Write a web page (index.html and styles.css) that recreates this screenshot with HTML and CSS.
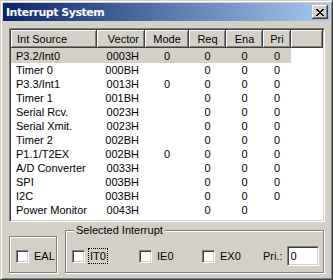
FILE: index.html
```html
<!DOCTYPE html>
<html lang="en">
<head>
  <meta charset="UTF-8" />
  <meta name="viewport" content="width=device-width, initial-scale=1.0"/>
  <title>Interrupt System</title>
  <link rel="stylesheet" href="styles.css">
</head>
<body>
  <div class="window">
    <div class="titlebar">
      <span class="title">Interrupt System</span>
      <button class="close-btn" type="button">
        <svg width="8" height="7" viewBox="0 0 8 7" shape-rendering="crispEdges">
          <path fill="#000" d="M0 0h2v1h-2z M6 0h2v1h-2z M1 1h2v1h-2z M5 1h2v1h-2z M2 2h4v1h-4z M3 3h2v1h-2z M2 4h4v1h-4z M1 5h2v1h-2z M5 5h2v1h-2z M0 6h2v1h-2z M6 6h2v1h-2z"/>
        </svg>
      </button>
    </div>

    <div class="client">
      <div class="listview">
        <table class="irq-table">
          <colgroup>
            <col class="w-src"><col class="w-vec"><col class="w-mode"><col class="w-req"><col class="w-ena"><col class="w-pri"><col>
          </colgroup>
          <thead>
            <tr>
              <th class="left">Int Source</th>
              <th class="right">Vector</th>
              <th>Mode</th>
              <th>Req</th>
              <th>Ena</th>
              <th>Pri</th>
              <th></th>
            </tr>
          </thead>
          <tbody>
            <tr class="selected"><td class="left">P3.2/Int0</td><td class="right">0003H</td><td>0</td><td>0</td><td>0</td><td>0</td><td class="filler"></td></tr>
            <tr><td class="left">Timer 0</td><td class="right">000BH</td><td></td><td>0</td><td>0</td><td>0</td><td class="filler"></td></tr>
            <tr><td class="left">P3.3/Int1</td><td class="right">0013H</td><td>0</td><td>0</td><td>0</td><td>0</td><td class="filler"></td></tr>
            <tr><td class="left">Timer 1</td><td class="right">001BH</td><td></td><td>0</td><td>0</td><td>0</td><td class="filler"></td></tr>
            <tr><td class="left">Serial Rcv.</td><td class="right">0023H</td><td></td><td>0</td><td>0</td><td>0</td><td class="filler"></td></tr>
            <tr><td class="left">Serial Xmit.</td><td class="right">0023H</td><td></td><td>0</td><td>0</td><td>0</td><td class="filler"></td></tr>
            <tr><td class="left">Timer 2</td><td class="right">002BH</td><td></td><td>0</td><td>0</td><td>0</td><td class="filler"></td></tr>
            <tr><td class="left">P1.1/T2EX</td><td class="right">002BH</td><td>0</td><td>0</td><td>0</td><td>0</td><td class="filler"></td></tr>
            <tr><td class="left">A/D Converter</td><td class="right">0033H</td><td></td><td>0</td><td>0</td><td>0</td><td class="filler"></td></tr>
            <tr><td class="left">SPI</td><td class="right">003BH</td><td></td><td>0</td><td>0</td><td>0</td><td class="filler"></td></tr>
            <tr><td class="left">I2C</td><td class="right">003BH</td><td></td><td>0</td><td>0</td><td>0</td><td class="filler"></td></tr>
            <tr><td class="left">Power Monitor</td><td class="right">0043H</td><td></td><td>0</td><td>0</td><td></td><td class="filler"></td></tr>
          </tbody>
        </table>
      </div>

      <div class="bottom">
        <div class="group eal-box">
          <div class="group-row">
            <label class="cb"><span class="box"></span><span class="cb-text">EAL</span></label>
          </div>
        </div>
        <fieldset class="group sel-box">
          <legend>Selected Interrupt</legend>
          <div class="group-row sel-row">
            <label class="cb"><span class="box"></span><span class="cb-text focused">IT0</span></label>
            <label class="cb"><span class="box"></span><span class="cb-text">IE0</span></label>
            <label class="cb"><span class="box"></span><span class="cb-text">EX0</span></label>
            <div class="pri">
              <span>Pri.:</span>
              <span class="edit">0</span>
            </div>
          </div>
        </fieldset>
      </div>
    </div>
  </div>
</body>
</html>
```

FILE: styles.css
```css
body {
  margin: 0;
  font-family: "Liberation Sans", Arial, sans-serif;
  font-size: 11px;
  color: #000;
  background: #d4d0c8;
}

.window {
  width: 333px;
  height: 280px;
  box-sizing: border-box;
  background: #d4d0c8;
  border: 1px solid;
  border-color: #d4d0c8 #404040 #404040 #d4d0c8;
  box-shadow: inset 1px 1px #fff, inset -1px -1px #808080;
  padding: 2px;
  display: flex;
  flex-direction: column;
}

/* title bar */
.titlebar {
  height: 18px;
  flex-shrink: 0;
  display: flex;
  align-items: center;
  justify-content: space-between;
  background: linear-gradient(to right, #0a246a, #a6caf0);
  padding: 0 2px 0 3px;
}

.title {
  color: #fff;
  font-family: "DejaVu Sans", sans-serif;
  font-weight: bold;
  font-size: 11px;
  letter-spacing: -0.5px;
}

.close-btn {
  width: 16px;
  height: 14px;
  padding: 0;
  margin: 0;
  border: 0;
  background: #d4d0c8;
  box-shadow: inset -1px -1px #404040, inset 1px 1px #fff, inset -2px -2px #808080;
  display: flex;
  align-items: center;
  justify-content: center;
}

.close-btn svg {
  display: block;
  margin: 0 1px 0 0;
}

/* client area */
.client {
  flex: 1;
  padding: 7px 5px 0 6px;
  display: flex;
  flex-direction: column;
}

.listview {
  height: 194px;
  box-sizing: border-box;
  background: #fff;
  border: 1px solid;
  border-color: #808080 #fff #fff #808080;
  box-shadow: inset 1px 1px #404040, inset -1px -1px #d4d0c8;
  padding: 1px;
  overflow: hidden;
}

.irq-table {
  width: 100%;
  table-layout: fixed;
  border-collapse: separate;
  border-spacing: 0;
}

.w-src { width: 86px; }
.w-vec { width: 48px; }
.w-mode { width: 44px; }
.w-req { width: 37px; }
.w-ena { width: 37px; }
.w-pri { width: 28px; }

.irq-table th {
  height: 18px;
  padding: 0;
  font-weight: normal;
  background: #d4d0c8;
  box-shadow: inset -1px -1px #404040, inset 1px 1px #fff, inset -2px -2px #808080;
  text-align: center;
  white-space: nowrap;
}

.irq-table td {
  height: 14px;
  line-height: 14px;
  padding: 0;
  text-align: center;
  white-space: nowrap;
}

.irq-table .left {
  text-align: left;
  padding-left: 5px;
}

.irq-table th.left {
  padding-left: 6px;
}

.irq-table .right {
  text-align: right;
  padding-right: 6px;
}

.irq-table tbody tr:first-child td {
  padding-top: 1px;
}

.selected td {
  background: #d4d0c8;
}

.selected td.filler {
  background: #fff;
}

/* bottom controls */
.bottom {
  display: flex;
  align-items: flex-end;
  margin-top: 2px;
}

.group {
  margin: 0;
  padding: 0 6px;
  border: 1px solid #808080;
  box-shadow: inset 1px 1px #fff, 1px 1px #fff;
  min-width: 0;
}

.eal-box {
  width: 48px;
  box-sizing: border-box;
}

.sel-box {
  flex: 1;
  margin-left: 8px;
  margin-right: 1px;
}

.sel-box legend {
  margin-left: 2px;
  padding: 0 2px;
  background: #d4d0c8;
  line-height: 13px;
}

.group-row {
  height: 35px;
  box-sizing: border-box;
  padding-top: 3px;
  display: flex;
  align-items: center;
}

.sel-row {
  display: grid;
  grid-template-columns: 67px 63px 61px auto;
  align-items: center;
}

.cb {
  display: flex;
  align-items: center;
  gap: 5px;
}

.box {
  width: 13px;
  height: 13px;
  box-sizing: border-box;
  background: #fff;
  border: 1px solid;
  border-color: #808080 #fff #fff #808080;
  box-shadow: inset 1px 1px #404040, inset -1px -1px #d4d0c8;
}

.cb-text.focused {
  outline: 1px dotted #000;
  outline-offset: 1px;
}

.pri {
  display: flex;
  align-items: center;
  gap: 4px;
}

.edit {
  width: 32px;
  height: 20px;
  box-sizing: border-box;
  background: #fff;
  border: 1px solid;
  border-color: #808080 #fff #fff #808080;
  box-shadow: inset 1px 1px #404040, inset -1px -1px #d4d0c8;
  padding: 0 3px;
  line-height: 18px;
}
```
